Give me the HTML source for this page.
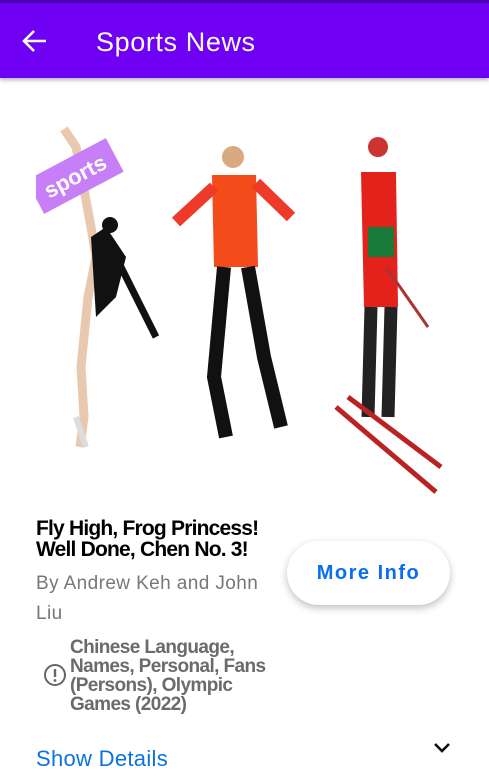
<!DOCTYPE html>
<html><head><meta charset="utf-8"><style>
body{margin:0;width:489px;height:779px;overflow:hidden;background:#fff;font-family:"Liberation Sans",sans-serif;position:relative}
.hdr{position:absolute;left:0;top:0;width:489px;height:78px;background:#6f00f4;border-top:3px solid #4d00b0;box-sizing:border-box;box-shadow:0 2px 4px rgba(0,0,0,.3)}
.hdr .t{position:absolute;left:96px;top:24px;color:#fff;font-size:27px;letter-spacing:.6px}
.img{position:absolute;left:36px;top:117px;width:412px;height:380px}
.title{position:absolute;left:36px;top:518px;font-weight:bold;font-size:21px;line-height:21px;letter-spacing:-.8px;color:#000}
.by{position:absolute;left:36px;top:569px;color:#777;font-size:19px;line-height:30px;width:235px;letter-spacing:.4px}
.tags{position:absolute;left:70px;top:638px;color:#6b6b6b;font-weight:bold;font-size:19px;line-height:19px;letter-spacing:-.6px;width:222px}
.btn{position:absolute;left:287px;top:541px;width:163px;height:64px;border-radius:32px;background:#fff;box-shadow:0 3px 8px rgba(0,0,0,.25);color:#0a6ef0;font-size:20px;font-weight:bold;letter-spacing:1.5px;text-align:center;line-height:64px}
.sd{position:absolute;left:36px;top:746px;color:#0a73e0;font-size:22px;letter-spacing:.3px}
</style></head><body>
<div class="hdr"><svg style="position:absolute;left:22px;top:26px" width="26" height="24" viewBox="0 0 26 24"><path d="M24 12H3M12 2L2 12l10 10" stroke="#fff" stroke-width="2.6" fill="none"/></svg><div class="t">Sports News</div></div>
<svg class="img" viewBox="0 0 412 380">
<rect width="412" height="380" fill="#fff"/>
<path d="M28 12 L40 30 L55 110 L60 140 L52 180 L45 250 L48 300 L44 330" stroke="#e8c9b0" stroke-width="9" fill="none"/>
<path d="M55 120 L70 110 L90 140 L80 180 L60 200 Z" fill="#111"/>
<path d="M80 140 L120 220" stroke="#111" stroke-width="7"/>
<circle cx="74" cy="108" r="8" fill="#111"/>
<path d="M40 300 L50 330" stroke="#ddd" stroke-width="6"/>
<circle cx="197" cy="40" r="11" fill="#d9a982"/>
<path d="M176 58 L220 58 L222 150 L178 150 Z" fill="#f44b1a"/>
<path d="M178 70 L140 105 M220 66 L255 100" stroke="#ee3a2a" stroke-width="12"/>
<path d="M188 150 L178 260 L190 320 M212 150 L228 240 L245 310" stroke="#111" stroke-width="14" fill="none"/>
<circle cx="342" cy="30" r="10" fill="#c33"/>
<path d="M325 55 L360 55 L362 190 L328 190 Z" fill="#e3221c"/>
<path d="M332 110 L358 110 L358 140 L332 140Z" fill="#1a7a3a"/>
<path d="M335 190 L332 300 M355 190 L352 300" stroke="#222" stroke-width="13"/>
<path d="M300 290 L400 375 M312 280 L405 350" stroke="#b22" stroke-width="5"/>
<path d="M350 150 L392 210" stroke="#a33" stroke-width="3"/>
<g transform="translate(39,59) rotate(-28)"><rect x="-45" y="-19" width="90" height="38" fill="#c67ff7"/><text x="0" y="8" text-anchor="middle" fill="#fff" font-weight="bold" font-size="22" font-family="Liberation Sans">sports</text></g>
</svg>
<div class="title">Fly High, Frog Princess!<br>Well Done, Chen No. 3!</div>
<div class="by">By Andrew Keh and John Liu</div>
<svg style="position:absolute;left:43px;top:663px" width="24" height="24" viewBox="0 0 24 24"><circle cx="12" cy="12" r="10" stroke="#666" stroke-width="2" fill="none"/><path d="M12 6v8" stroke="#666" stroke-width="2.4"/><circle cx="12" cy="17.5" r="1.4" fill="#666"/></svg>
<div class="tags">Chinese Language,<br>Names, Personal, Fans<br>(Persons), Olympic<br>Games (2022)</div>
<div class="btn">More Info</div>
<div class="sd">Show Details</div>
<svg style="position:absolute;left:433px;top:742px" width="18" height="12" viewBox="0 0 18 12"><path d="M2 2l7 7 7-7" stroke="#111" stroke-width="2.6" fill="none"/></svg>
</body></html>
